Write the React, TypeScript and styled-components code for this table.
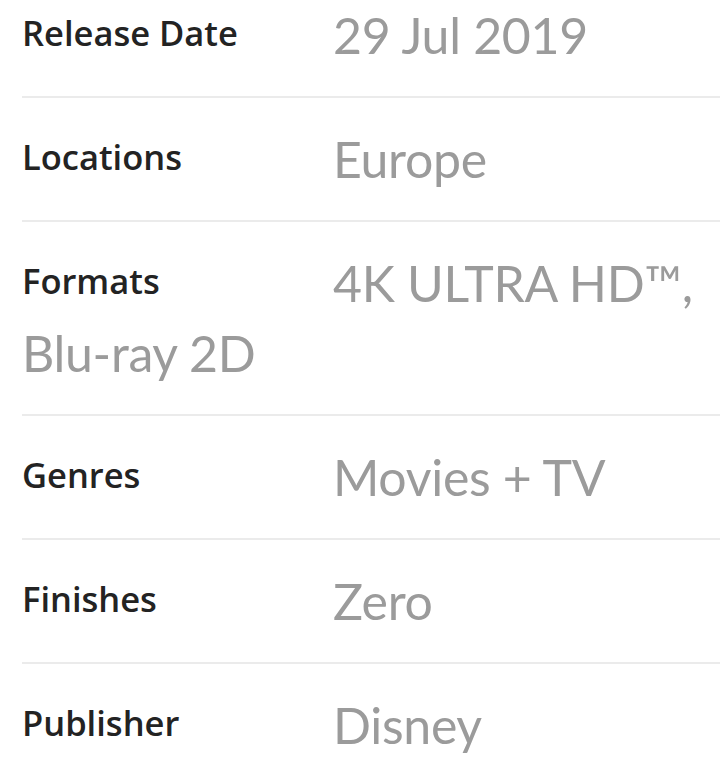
import React from 'react';
import styled, { createGlobalStyle } from 'styled-components';

const GlobalStyle = createGlobalStyle`
  html, body {
    margin: 0;
    padding: 0;
    background: #fff;
  }
  body {
    font-family: Lato, "Open Sans", "Liberation Sans", sans-serif;
    -webkit-font-smoothing: antialiased;
  }
`;

const DetailsList = styled.dl`
  margin: 0;
  padding: 0 0 0 22px;
  overflow: hidden;
`;

const DetailRow = styled.div<{ $first?: boolean }>`
  padding: ${(p) => (p.$first ? '0' : '26px')} 0 26px;
  border-bottom: 2px solid #ebebeb;

  &::after {
    content: '';
    display: block;
    clear: both;
  }
`;

const Label = styled.dt`
  float: left;
  width: 311px;
  margin: 0;
  font-family: "Open Sans", Lato, sans-serif;
  font-size: 34.5px;
  line-height: 65px;
  font-weight: 600;
  letter-spacing: 0;
  color: #232323;
`;

const Value = styled.dd`
  margin: 0;
  font-size: 50px;
  line-height: 70px;
  font-weight: 400;
  letter-spacing: -0.3px;
  color: #9b9b9b;
`;

const details = [
  { label: 'Release Date', value: '29 Jul 2019' },
  { label: 'Locations', value: 'Europe' },
  { label: 'Formats', value: '4K ULTRA HD™, Blu-ray 2D' },
  { label: 'Genres', value: 'Movies + TV' },
  { label: 'Finishes', value: 'Zero' },
  { label: 'Publisher', value: 'Disney' },
];

export default function App() {
  return (
    <>
      <GlobalStyle />
      <DetailsList>
        {details.map((d, i) => (
          <DetailRow key={d.label} $first={i === 0}>
            <Label>{d.label}</Label>
            <Value>{d.value}</Value>
          </DetailRow>
        ))}
      </DetailsList>
    </>
  );
}
